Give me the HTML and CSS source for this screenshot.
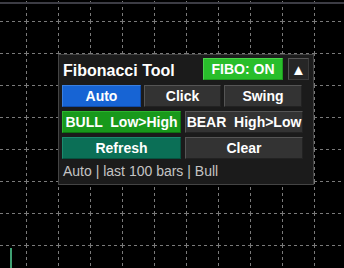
FILE: index.html
```html
<!DOCTYPE html>
<html lang="en">
  <head>
    <meta charset="UTF-8" />
    <meta name="viewport" content="width=device-width, initial-scale=1.0" />
    <title>Fibonacci Tool</title>
    <link rel="stylesheet" href="styles.css">
  </head>
  <body>
    <div class="chart">
      <svg class="grid" width="344" height="268" xmlns="http://www.w3.org/2000/svg">
        <defs>
          <pattern id="cells" x="26" y="21" width="32" height="32" patternUnits="userSpaceOnUse">
            <line x1="0.5" y1="0" x2="0.5" y2="32" stroke="#7a7a7a" stroke-dasharray="3 3" />
            <line x1="0" y1="0.5" x2="32" y2="0.5" stroke="#7a7a7a" stroke-dasharray="3 3" />
          </pattern>
        </defs>
        <rect width="344" height="268" fill="url(#cells)" />
        <rect x="0" y="2" width="344" height="2" fill="#3c3c44" />
        <rect x="10" y="248" width="2" height="20" fill="#3f9f72" />
      </svg>

      <div class="panel">
        <div class="panel-head">
          <span class="title">Fibonacci Tool</span>
          <button class="btn btn-on">FIBO: ON</button>
          <button class="btn btn-toggle">&#9650;</button>
        </div>
        <div class="row row-3">
          <button class="btn btn-blue">Auto</button>
          <button class="btn">Click</button>
          <button class="btn">Swing</button>
        </div>
        <div class="row row-2">
          <button class="btn btn-green">BULL  Low&gt;High</button>
          <button class="btn">BEAR  High&gt;Low</button>
        </div>
        <div class="row row-2">
          <button class="btn btn-teal">Refresh</button>
          <button class="btn">Clear</button>
        </div>
        <div class="status">Auto | last 100 bars | Bull</div>
      </div>
    </div>
  </body>
</html>
```

FILE: styles.css
```css
body {
  margin: 0;
  background-color: #000;
  font-family: "Liberation Sans", Arial, sans-serif;
}
.chart {
  position: relative;
  width: 344px;
  height: 268px;
  overflow: hidden;
}
.grid {
  display: block;
}
.panel {
  position: absolute;
  left: 58px;
  top: 54px;
  width: 248px;
  padding: 3px 3px 5px 3px;
  background-color: #1b1b1b;
  border: 1px solid #444;
}
.panel-head {
  display: flex;
  align-items: center;
  height: 22px;
  margin-bottom: 5px;
}
.title {
  flex: 1;
  padding-left: 1px;
  padding-top: 4px;
  color: #fff;
  font-size: 16px;
  font-weight: bold;
}
.row {
  display: grid;
  width: 241px;
  margin-bottom: 4px;
}
.row-3 {
  grid-template-columns: 79px 77px 78px;
  column-gap: 3px;
}
.row-2 {
  grid-template-columns: 119px 118px;
  column-gap: 4px;
}
.btn {
  height: 22px;
  padding: 0;
  font-family: "Liberation Sans", Arial, sans-serif;
  font-size: 14px;
  font-weight: bold;
  color: #fff;
  white-space: pre;
  background-color: #333;
  border: 1px solid;
  border-color: #555 #222 #222 #555;
  cursor: pointer;
}
.btn-blue {
  background-color: #1764d4;
  border-color: #3a80e0 #0f4aa8 #0f4aa8 #3a80e0;
}
.btn-green {
  background-color: #18991b;
  border-color: #2cb52e #0e7210 #0e7210 #2cb52e;
}
.btn-teal {
  background-color: #0b6f56;
  border-color: #1b8b6e #07523f #07523f #1b8b6e;
}
.btn-on {
  width: 80px;
  margin-right: 5px;
  font-size: 14px;
  background-color: #29be2b;
  border-color: #4ad44c #1c9a1e #1c9a1e #4ad44c;
}
.btn-toggle {
  width: 21px;
  margin-right: 1px;
  font-size: 15px;
  line-height: 1;
  background-color: #262626;
  border-color: #555 #3a3a3a #3a3a3a #555;
}
.status {
  padding-left: 1px;
  color: #c4c4c4;
  font-size: 14px;
}
```
